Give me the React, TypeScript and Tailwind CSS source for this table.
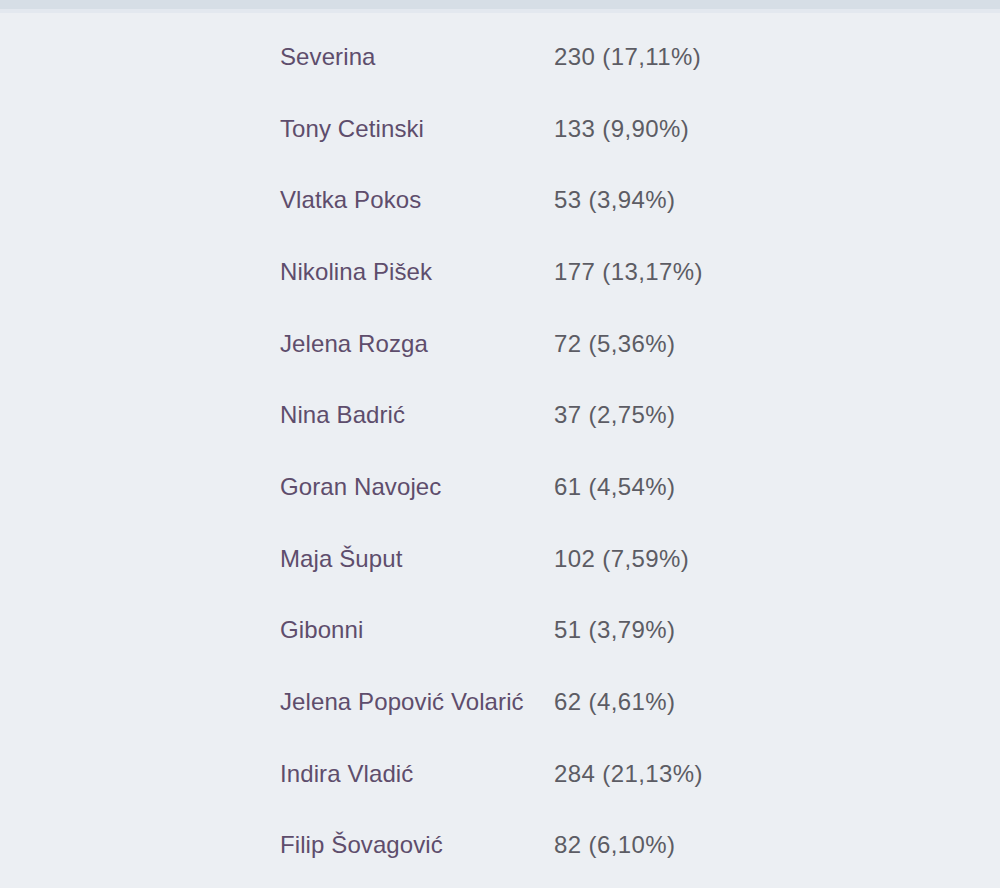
import React from "react";

const rows: [string, string][] = [
  ["Severina", "230 (17,11%)"],
  ["Tony Cetinski", "133 (9,90%)"],
  ["Vlatka Pokos", "53 (3,94%)"],
  ["Nikolina Pišek", "177 (13,17%)"],
  ["Jelena Rozga", "72 (5,36%)"],
  ["Nina Badrić", "37 (2,75%)"],
  ["Goran Navojec", "61 (4,54%)"],
  ["Maja Šuput", "102 (7,59%)"],
  ["Gibonni", "51 (3,79%)"],
  ["Jelena Popović Volarić", "62 (4,61%)"],
  ["Indira Vladić", "284 (21,13%)"],
  ["Filip Šovagović", "82 (6,10%)"],
];

export default function App() {
  return (
    <div
      className="w-[1000px] h-[888px] overflow-hidden bg-[#eceff3]"
      style={{ fontFamily: '"Liberation Sans", Arial, sans-serif' }}
    >
      <div className="h-[9px] bg-[#d6dee6]" />
      <div className="h-[4px] bg-[#e3e8ef]" />
      <div className="pl-[280px] pt-[8px]">
        {rows.map(([name, val]) => (
          <div key={name} className="flex items-center h-[71.7px] text-[24px] leading-none">
            <div className="w-[274px] text-[#5e4d6c] tracking-[0.1px]">{name}</div>
            <div className="text-[#5c5c64] tracking-[0.4px]">{val}</div>
          </div>
        ))}
      </div>
    </div>
  );
}
